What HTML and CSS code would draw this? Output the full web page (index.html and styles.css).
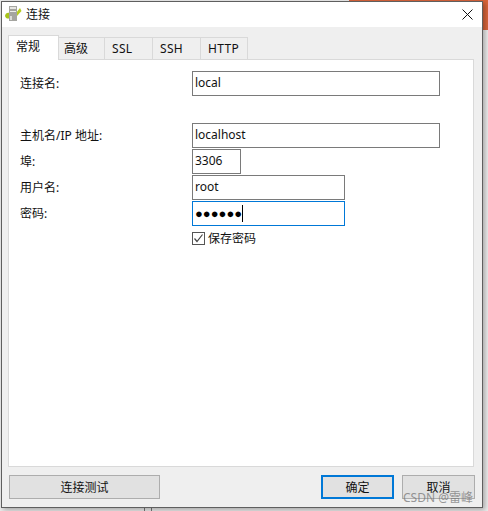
FILE: index.html
```html
<!DOCTYPE html>
<html lang="zh">
  <head>
    <meta charset="utf-8">
    <title>连接</title>
    <link rel="stylesheet" href="styles.css">
  </head>
  <body>
    <span class="behind-right"></span>
    <span class="behind-mark"></span>
    <div class="dialog">
      <div class="titlebar">
        <svg class="app-icon" width="18" height="18" viewBox="0 0 18 18">
          <path d="M0 11 C0 8 3 7 5 8 L5 13 C3 14 1 14 0 11Z" fill="#a8c41c"/>
          <path d="M11 8 L15 3 L16.5 6 L12 11Z" fill="#b6cc22"/>
          <rect x="4" y="1" width="8" height="15" fill="#a5a5a0"/>
          <rect x="5" y="2" width="6" height="2" fill="#e6e6e2"/>
          <rect x="5" y="6" width="6" height="1" fill="#eeeeea"/>
          <rect x="5" y="11" width="2" height="4" fill="#dcdcd8"/>
        </svg>
        <span class="title-text">连接</span>
        <svg class="close-icon" width="11" height="11" viewBox="0 0 11 11">
          <path d="M0.5 0.5 L10.5 10.5 M10.5 0.5 L0.5 10.5" stroke="#111" stroke-width="1" fill="none"/>
        </svg>
      </div>
      <div class="body">
        <div class="tabs">
          <div class="tab active">常规</div>
          <div class="tab tab-narrow">高级</div>
          <div class="tab">SSL</div>
          <div class="tab">SSH</div>
          <div class="tab tab-last">HTTP</div>
        </div>
        <div class="panel">
          <div class="row row-name">
            <label class="label">连接名:</label>
            <div class="input input-wide">local</div>
          </div>
          <div class="row row-host">
            <label class="label">主机名/IP 地址:</label>
            <div class="input input-wide">localhost</div>
          </div>
          <div class="row">
            <label class="label">埠:</label>
            <div class="input input-port">3306</div>
          </div>
          <div class="row">
            <label class="label">用户名:</label>
            <div class="input input-mid">root</div>
          </div>
          <div class="row">
            <label class="label">密码:</label>
            <div class="input input-mid focus"><span class="dots">●●●●●●</span><span class="caret"></span></div>
          </div>
          <div class="row row-check">
            <span class="label"></span>
            <span class="checkbox">
              <svg width="11" height="11" viewBox="0 0 11 11"><path d="M1.5 5.5 L4 8.5 L9.5 1.5" stroke="#444" stroke-width="1.2" fill="none"/></svg>
            </span>
            <span class="check-text">保存密码</span>
          </div>
        </div>
        <div class="footer">
          <div class="btn btn-test">连接测试</div>
          <div class="footer-right">
            <div class="btn btn-ok">确定</div>
            <div class="btn btn-cancel">取消<span class="watermark">CSDN @雷峰</span></div>
          </div>
        </div>
      </div>
    </div>
  </body>
</html>
```

FILE: styles.css
```css
html, body {
  margin: 0;
  padding: 0;
  height: 100%;
}
body {
  width: 488px;
  height: 511px;
  overflow: hidden;
  background: #ececec;
  font-family: "Noto Sans", "Noto Sans CJK SC", sans-serif;
  font-size: 12px;
  color: #111;
  position: relative;
}

.behind-right {
  position: absolute;
  right: 0;
  top: 0;
  width: 139px;
  height: 30px;
  background: #d9643a;
}
.behind-mark {
  position: absolute;
  left: 144px;
  top: 505px;
  width: 6px;
  height: 6px;
  border: 1px solid #777;
  border-bottom: 0;
}

.dialog {
  position: absolute;
  left: 1px;
  top: 1px;
  width: 480px;
  height: 505px;
  border: 1px solid #5f5f5f;
  background: #efefef;
  box-shadow: 2px 2px 5px rgba(0,0,0,0.3);
  display: flex;
  flex-direction: column;
}

.titlebar {
  box-sizing: border-box;
  height: 25px;
  background: #fff;
  display: flex;
  align-items: center;
  padding: 0 0 1px 3px;
  flex: none;
}
.app-icon {
  margin-right: 3px;
}
.close-icon {
  margin-left: auto;
  margin-right: 9px;
}

.body {
  flex: 1;
  padding: 8px 8px 8px 6px;
  display: flex;
  flex-direction: column;
}

.tabs {
  display: flex;
  height: 24px;
  align-items: flex-end;
  flex: none;
}
.tab {
  box-sizing: border-box;
  width: 48px;
  height: 22px;
  line-height: 21px;
  padding-left: 7px;
  letter-spacing: 0.3px;
  background: #efefef;
  border: 1px solid #d9d9d9;
  border-bottom: 0;
  border-left: 0;
}
.tab-narrow { width: 46px; padding-left: 5px; letter-spacing: 0; }
.tab-last { width: 47px; }
.tab.active {
  width: 51px;
  height: 25px;
  line-height: 21px;
  padding-left: 7px;
  letter-spacing: 0;
  background: #fff;
  border-left: 1px solid #d9d9d9;
  margin-bottom: -1px;
  position: relative;
  z-index: 1;
}

.panel {
  flex: 1;
  background: #fff;
  border: 1px solid #d9d9d9;
  padding: 11px 0 0 11px;
}

.row {
  display: flex;
  align-items: flex-start;
  height: 26px;
}
.row-host {
  margin-top: 26px;
}
.label {
  width: 172px;
  line-height: 26px;
  flex: none;
}
.input {
  box-sizing: border-box;
  height: 25px;
  border: 1px solid #7a7a7a;
  background: #fff;
  padding-left: 2px;
  line-height: 21px;
}
.input-wide { width: 248px; }
.input-port { width: 49px; }
.input-mid { width: 153px; }
.input.focus {
  border-color: #0078d7;
  display: flex;
  align-items: center;
}
.dots {
  font-family: "Liberation Sans", sans-serif;
  font-size: 13px;
  color: #000;
}
.caret {
  width: 1px;
  height: 17px;
  background: #000;
}

.row-check {
  height: 18px;
  align-items: flex-end;
}
.row-check .label {
  line-height: 13px;
}
.checkbox {
  box-sizing: border-box;
  width: 13px;
  height: 13px;
  border: 1px solid #555;
  display: flex;
  align-items: center;
  justify-content: center;
}
.checkbox svg {
  flex: none;
}
.check-text {
  margin-left: 3px;
  line-height: 13px;
}

.footer {
  flex: none;
  display: flex;
  justify-content: space-between;
  margin: 8px -1px 0 0;
  padding-left: 1px;
}
.footer-right {
  display: flex;
  gap: 8px;
}
.btn {
  box-sizing: border-box;
  height: 24px;
  line-height: 23px;
  text-align: center;
  background: #e1e1e1;
  border: 1px solid #adadad;
}
.btn-test { width: 151px; }
.btn-ok {
  width: 73px;
  border: 2px solid #0078d7;
  line-height: 21px;
}
.btn-cancel {
  width: 73px;
  position: relative;
}
.watermark {
  position: absolute;
  right: 1px;
  top: 10px;
  white-space: nowrap;
  color: rgba(110,110,110,0.7);
}
```
